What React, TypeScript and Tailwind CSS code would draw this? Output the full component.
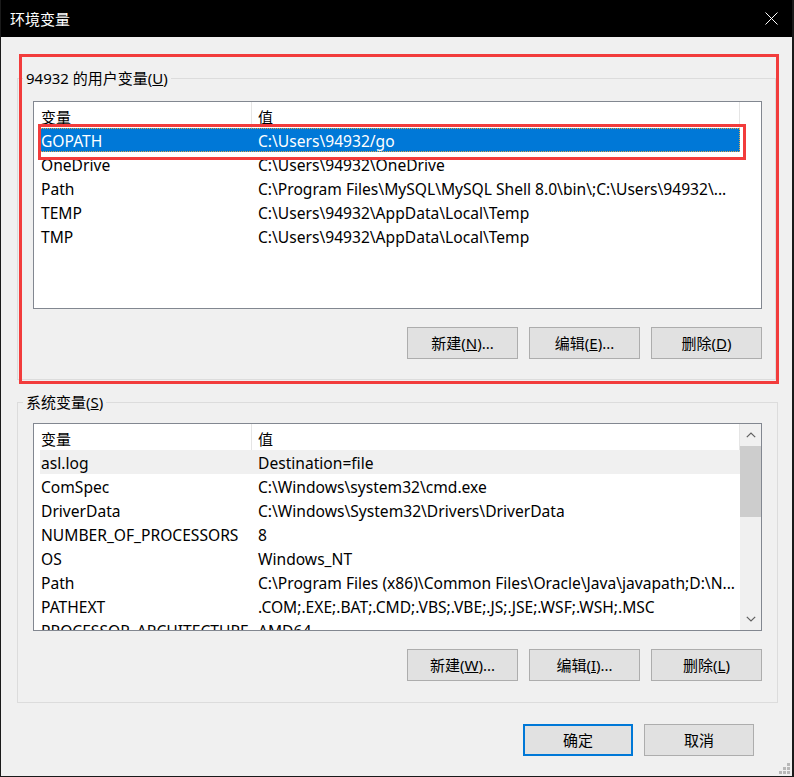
import React from "react";

type Row = { name: string; value: string };

const userRows: Row[] = [
  { name: "GOPATH", value: "C:\\Users\\94932/go" },
  { name: "OneDrive", value: "C:\\Users\\94932\\OneDrive" },
  { name: "Path", value: "C:\\Program Files\\MySQL\\MySQL Shell 8.0\\bin\\;C:\\Users\\94932\\..." },
  { name: "TEMP", value: "C:\\Users\\94932\\AppData\\Local\\Temp" },
  { name: "TMP", value: "C:\\Users\\94932\\AppData\\Local\\Temp" },
];

const sysRows: Row[] = [
  { name: "asl.log", value: "Destination=file" },
  { name: "ComSpec", value: "C:\\Windows\\system32\\cmd.exe" },
  { name: "DriverData", value: "C:\\Windows\\System32\\Drivers\\DriverData" },
  { name: "NUMBER_OF_PROCESSORS", value: "8" },
  { name: "OS", value: "Windows_NT" },
  { name: "Path", value: "C:\\Program Files (x86)\\Common Files\\Oracle\\Java\\javapath;D:\\N..." },
  { name: "PATHEXT", value: ".COM;.EXE;.BAT;.CMD;.VBS;.VBE;.JS;.JSE;.WSF;.WSH;.MSC" },
  { name: "PROCESSOR_ARCHITECTURE", value: "AMD64" },
];

function Btn({ children }: { children: React.ReactNode }) {
  return (
    <div className="flex h-[32px] w-[111px] items-center justify-center border border-[#adadad] bg-[#e1e1e1] text-[15px] leading-[20px] text-black">
      {children}
    </div>
  );
}

function ListRow({ row, mode }: { row: Row; mode: "sel" | "gray" | "none" }) {
  const cls =
    mode === "sel"
      ? "ml-[6px] flex h-[24px] w-[700px] items-start bg-[#0078d7] text-white outline-1 outline-dotted outline-[#e0a84a] -outline-offset-1"
      : mode === "gray"
      ? "ml-[6px] flex h-[24px] w-[700px] items-start bg-[#f0f0f0] text-black"
      : "ml-[6px] flex h-[24px] w-[700px] items-start text-black";
  return (
    <div className={cls}>
      <div className="w-[211px] shrink-0 overflow-hidden whitespace-nowrap pl-[1px] pt-[2px] text-[15.6px] leading-[22px]">{row.name}</div>
      <div className="flex-1 overflow-hidden whitespace-nowrap pl-[7px] pt-[2px] text-[15.6px] leading-[22px]">{row.value}</div>
    </div>
  );
}

function ListView({ rows, mode, scrollbar }: { rows: Row[]; mode: "sel" | "gray"; scrollbar: boolean }) {
  return (
    <div className="ml-[15px] flex h-[208px] w-[729px] overflow-hidden border border-[#828790] bg-white text-[15px]">
      <div className="flex w-[706px] shrink-0 flex-col">
        <div className="flex h-[26px] shrink-0">
          <div className="w-[218px] shrink-0 border-r border-[#e5e5e5] pl-[7px] pt-[5px] leading-[20px]">变量</div>
          <div className="w-[488px] shrink-0 border-r border-[#e5e5e5] pl-[6px] pt-[5px] leading-[20px]">值</div>
        </div>
        {rows.map((r, i) => (
          <ListRow key={r.name + i} row={r} mode={i === 0 ? mode : "none"} />
        ))}
      </div>
      {scrollbar ? (
        <div className="flex w-[21px] shrink-0 flex-col bg-[#f0f0f0]">
          <div className="flex h-[22px] shrink-0 items-center justify-center">
            <svg width="10" height="6" viewBox="0 0 10 6">
              <polyline points="0.8,5.2 5,1 9.2,5.2" fill="none" stroke="#606060" strokeWidth="1.2" />
            </svg>
          </div>
          <div className="h-[71px] shrink-0 bg-[#cdcdcd]" />
          <div className="flex-1" />
          <div className="flex h-[22px] shrink-0 items-center justify-center">
            <svg width="10" height="6" viewBox="0 0 10 6">
              <polyline points="0.8,0.8 5,5 9.2,0.8" fill="none" stroke="#606060" strokeWidth="1.2" />
            </svg>
          </div>
        </div>
      ) : (
        <div className="flex-1" />
      )}
    </div>
  );
}

export default function App() {
  return (
    <div className="relative flex h-[777px] w-[794px] flex-col border-b border-l border-r-2 border-[#1a1a1a] bg-[#f0f0f0] font-['Noto_Sans','Noto_Sans_CJK_SC',sans-serif] text-[15px] text-black">
      {/* Title bar */}
      <div className="flex h-[37px] shrink-0 items-center justify-between bg-black pl-[9px] pr-[14px] text-white">
        <span className="leading-[20px]">环境变量</span>
        <svg width="13" height="13" viewBox="0 0 13 13">
          <line x1="0.5" y1="0.5" x2="12.5" y2="12.5" stroke="white" strokeWidth="1" />
          <line x1="12.5" y1="0.5" x2="0.5" y2="12.5" stroke="white" strokeWidth="1" />
        </svg>
      </div>

      {/* User variables */}
      <fieldset className="ml-[16px] mt-[31px] w-[759px] border border-[#dcdcdc] pb-[20px]">
        <legend className="ml-[5px] px-[3px] leading-[20px]">
          94932 的用户变量(<span className="underline">U</span>)
        </legend>
        <div className="mt-[13px]">
          <ListView rows={userRows} mode="sel" scrollbar={false} />
        </div>
        <div className="ml-[15px] mt-[18px] flex w-[729px] justify-end gap-[11px]">
          <Btn>
            新建(<span className="underline">N</span>)...
          </Btn>
          <Btn>
            编辑(<span className="underline">E</span>)...
          </Btn>
          <Btn>
            删除(<span className="underline">D</span>)
          </Btn>
        </div>
      </fieldset>

      {/* System variables */}
      <fieldset className="ml-[16px] mt-[12px] w-[761px] border border-[#dcdcdc] pb-[21px]">
        <legend className="ml-[5px] px-[3px] leading-[20px]">
          系统变量(<span className="underline">S</span>)
        </legend>
        <div className="mt-[11px]">
          <ListView rows={sysRows} mode="gray" scrollbar={true} />
        </div>
        <div className="ml-[15px] mt-[18px] flex w-[729px] justify-end gap-[11px]">
          <Btn>
            新建(<span className="underline">W</span>)...
          </Btn>
          <Btn>
            编辑(<span className="underline">I</span>)...
          </Btn>
          <Btn>
            删除(<span className="underline">L</span>)
          </Btn>
        </div>
      </fieldset>

      {/* Footer */}
      <div className="mt-[21px] flex justify-end gap-[11px] pr-[38px]">
        <div className="flex h-[32px] w-[110px] items-center justify-center border-2 border-[#0078d7] bg-[#e1e1e1] leading-[20px]">
          确定
        </div>
        <div className="flex h-[32px] w-[110px] items-center justify-center border border-[#adadad] bg-[#e1e1e1] leading-[20px]">
          取消
        </div>
      </div>

      {/* Resize grip */}
      <svg className="absolute bottom-[2px] right-[2px]" width="11" height="11" viewBox="0 0 11 11">
        <rect x="8" y="0" width="3" height="3" fill="#b8b8b8" />
        <rect x="4" y="4" width="3" height="3" fill="#b8b8b8" />
        <rect x="8" y="4" width="3" height="3" fill="#b8b8b8" />
        <rect x="0" y="8" width="3" height="3" fill="#b8b8b8" />
        <rect x="4" y="8" width="3" height="3" fill="#b8b8b8" />
        <rect x="8" y="8" width="3" height="3" fill="#b8b8b8" />
      </svg>

      {/* Red annotation boxes */}
      <div className="pointer-events-none absolute left-[18px] top-[54px] h-[330px] w-[760px] border-[3px] border-[#f23c3c]" />
      <div className="pointer-events-none absolute left-[37px] top-[124px] h-[36px] w-[708px] border-[3px] border-[#f23c3c]" />
    </div>
  );
}
